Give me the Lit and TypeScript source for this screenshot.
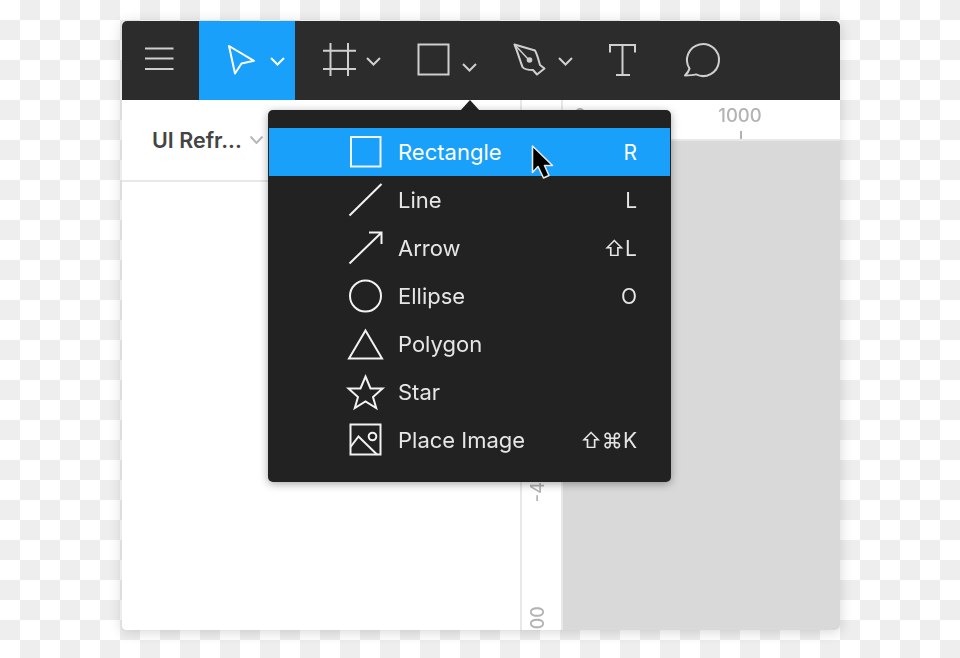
import { LitElement, html, css, svg } from "lit";
import { customElement } from "lit/decorators.js";

const chevron = (x1: number, y1: number, x2: number, y2: number) => {
  const mx = (x1 + x2) / 2;
  return svg`<path d="M${x1} ${y1}L${mx} ${y2}L${x2} ${y1}" fill="none"/>`;
};

const rows = [
  { label: "Rectangle", key: "R", active: true, icon: svg`<rect x="351" y="137" width="29.5" height="29.5"/>` },
  { label: "Line", key: "L", icon: svg`<path d="M349.5 215.5L381.5 184"/>` },
  { label: "Arrow", key: "⇧L", icon: svg`<path d="M349.5 263.5L381.5 232.5M369 232.5H381.5V244"/>` },
  { label: "Ellipse", key: "O", icon: svg`<circle cx="365.5" cy="296" r="15.5"/>` },
  { label: "Polygon", key: "", icon: svg`<path d="M365.5 330.5L382 358.5H349Z"/>` },
  { label: "Star", key: "", icon: svg`<path d="M365.5 376.5L370.5 388.5H382.5L373 397L376.2 408L365.5 401.5L354.8 408L358 397L348.5 388.5H360.5Z"/>` },
  { label: "Place Image", key: "⇧⌘K", icon: svg`<rect x="350.5" y="424.5" width="30" height="30"/><circle cx="372.5" cy="436.5" r="3.8"/><path d="M350.5 447L358.5 436.5L377 454.5"/>` },
];

@customElement("app-root")
export class AppRoot extends LitElement {
  static styles = css`
    :host {
      display: block;
      height: 658px;
      box-sizing: border-box;
      padding: 21px 120px 28px 122px;
      overflow: hidden;
      background: repeating-conic-gradient(#eeeeee 0 25%, #ffffff 0 50%) 0 0 / 40px 40px;
      font-family: Inter, "DejaVu Sans", sans-serif;
    }
    .window {
      position: relative;
      display: flex;
      flex-direction: column;
      height: 609px;
      border-radius: 5px;
      box-shadow: 0 2px 14px rgba(0, 0, 0, 0.16);
      background: #fff;
      filter: blur(0.35px);
    }
    .toolbar {
      display: flex;
      flex: none;
      height: 79px;
      background: #2c2c2c;
      border-radius: 5px 5px 0 0;
      overflow: hidden;
    }
    .tool {
      display: block;
      flex: none;
      height: 79px;
      fill: none;
      stroke: #cfcfcf;
      stroke-width: 2;
    }
    .tool.on {
      background: #18a0fb;
      stroke: #fff;
    }
    .tool .dot {
      fill: #cfcfcf;
      stroke: none;
    }
    .body {
      flex: 1;
      display: flex;
      min-height: 0;
    }
    .panel {
      flex: none;
      width: 400px;
      box-sizing: border-box;
      border-right: 2px solid #e8e8e8;
      background: #fff;
      border-bottom-left-radius: 5px;
    }
    .panel-head {
      display: flex;
      align-items: center;
      gap: 8px;
      height: 82px;
      box-sizing: border-box;
      padding: 0 0 0 30px;
      border-bottom: 2px solid #e8e8e8;
      font-size: 21.5px;
      font-weight: 600;
      color: #444;
      white-space: nowrap;
    }
    .panel-head svg {
      flex: none;
      stroke: #b8b8b8;
      stroke-width: 2;
    }
    .side {
      flex: 1;
      display: flex;
      flex-direction: column;
      min-width: 0;
    }
    .top-ruler {
      flex: none;
      display: flex;
      height: 41px;
      box-sizing: border-box;
      border-bottom: 2px solid #e8e8e8;
      background: #fff;
      color: #b3b3b3;
      font-size: 18.5px;
      font-weight: 500;
    }
    .corner {
      flex: none;
      width: 41px;
      box-sizing: border-box;
      border-right: 2px solid #e8e8e8;
    }
    .h-ruler {
      position: relative;
      flex: 1;
    }
    .h-label {
      position: absolute;
      top: 4px;
      transform: translateX(-50%);
    }
    .h-tick {
      position: absolute;
      bottom: 0;
      width: 2px;
      height: 8px;
      background: #b3b3b3;
    }
    .lower {
      flex: 1;
      display: flex;
      min-height: 0;
    }
    .v-ruler {
      position: relative;
      flex: none;
      width: 41px;
      box-sizing: border-box;
      border-right: 2px solid #e8e8e8;
      color: #b3b3b3;
      font-size: 18px;
      font-weight: 500;
    }
    .v-label {
      position: absolute;
      left: 5px;
      writing-mode: vertical-rl;
      transform: rotate(180deg);
    }
    .canvas {
      flex: 1;
      background: #d9d9d9;
      border-bottom-right-radius: 5px;
    }
    .notch {
      position: absolute;
      left: 338px;
      top: 79px;
      width: 20px;
      height: 11px;
      fill: #222;
    }
    .menu {
      position: absolute;
      left: 146px;
      top: 89px;
      width: 403px;
      box-sizing: border-box;
      padding: 18px 1px;
      border-radius: 5px;
      background: #222;
      box-shadow: 0 2px 9px rgba(0, 0, 0, 0.35);
    }
    .row {
      display: flex;
      align-items: center;
      height: 48px;
      box-sizing: border-box;
      padding-right: 33px;
      color: #e6e6e6;
      font-size: 22px;
    }
    .row.active {
      background: #18a0fb;
      color: #fff;
    }
    .row svg {
      flex: none;
      fill: none;
      stroke: #f2f2f2;
      stroke-width: 2;
      margin: 0 10px 0 75px;
    }
    .label {
      flex: 1;
    }
    .key {
      font-size: 21px;
    }
    .cursor {
      position: absolute;
      left: 408px;
      top: 122px;
      width: 26px;
      height: 36px;
    }
  `;

  render() {
    const tool = (x: number, w: number, body: unknown, on = false) => html`
      <svg class="tool ${on ? "on" : ""}" width=${w} height="79" viewBox="${x} 21 ${w} 79">${body}</svg>
    `;
    return html`
      <div class="window">
        <div class="toolbar">
          ${tool(122, 77, svg`<path d="M145 48.5H173.5M145 58.5H173.5M145 69H173.5"/>`)}
          ${tool(199, 96, svg`
            <path d="M229 46L254 60.8L241.5 63.5L235 73.5Z" stroke-linejoin="round"/>
            ${chevron(271, 58, 284, 64.5)}`, true)}
          ${tool(295, 96, svg`
            <path d="M330.5 43V76M348 43V76M323 50.8H356M323 69H356"/>
            ${chevron(367, 58, 380, 64.5)}`)}
          ${tool(391, 96, svg`
            <rect x="418.5" y="44.5" width="30" height="30"/>
            ${chevron(463, 64, 476, 70.5)}`)}
          ${tool(487, 96, svg`
            <path d="M514.5 44.5L535 50.5C537.5 55 538.5 60 540 65L544.5 68.5L537 74.5L533 70C528 70 524 69 522.5 67C520 61 518.5 54 514.5 44.5Z" stroke-linejoin="round"/>
            <path d="M514.5 44.5L529 60" stroke-width="1.5"/>
            <circle class="dot" cx="529.5" cy="60" r="2.8"/>
            ${chevron(559, 58, 572, 64.5)}`)}
          ${tool(583, 79, svg`
            <path d="M610 52.5V45H635V52.5M622.5 45V75M616 75H630"/>`)}
          ${tool(662, 178, svg`
            <path d="M689.5 68.6A16 16 0 1 1 696 74.4C692.5 75.5 688.5 75.5 685 75.5C687 73.5 688.8 71 689.5 68.6Z" stroke-linejoin="round"/>`)}
        </div>
        <div class="body">
          <div class="panel">
            <div class="panel-head">
              <span>UI Refr...</span>
              <svg width="13" height="8" viewBox="249 137 13 8" fill="none">${chevron(249.5, 137.5, 261.5, 144)}</svg>
            </div>
          </div>
          <div class="side">
            <div class="top-ruler">
              <div class="corner"></div>
              <div class="h-ruler">
                <span class="h-label" style="left: 17px">0</span>
                <span class="h-label" style="left: 177px">1000</span>
                <span class="h-tick" style="left: 177px"></span>
              </div>
            </div>
            <div class="lower">
              <div class="v-ruler">
                <span class="v-label" style="top: 341px">-4</span>
                <span class="v-label" style="top: 465px">00</span>
              </div>
              <div class="canvas"></div>
            </div>
          </div>
        </div>
        <svg class="notch" viewBox="0 0 20 11"><path d="M0 11L10 0L20 11Z"/></svg>
        <div class="menu">
          ${rows.map(
            (r, i) => html`
              <div class="row ${r.active ? "active" : ""}">
                <svg width="44" height="48" viewBox="344 ${128 + i * 48} 44 48">${r.icon}</svg>
                <span class="label">${r.label}</span>
                <span class="key">${r.key}</span>
              </div>
            `,
          )}
        </div>
        <svg class="cursor" viewBox="530 143 26 36">
          <path d="M532.5 146V172.5L538 166.5L543.5 178L549 175.5L544.5 165.5H552.5Z" fill="#000" stroke="#e8e8e8" stroke-width="1.6" stroke-linejoin="round"/>
        </svg>
      </div>
    `;
  }
}
